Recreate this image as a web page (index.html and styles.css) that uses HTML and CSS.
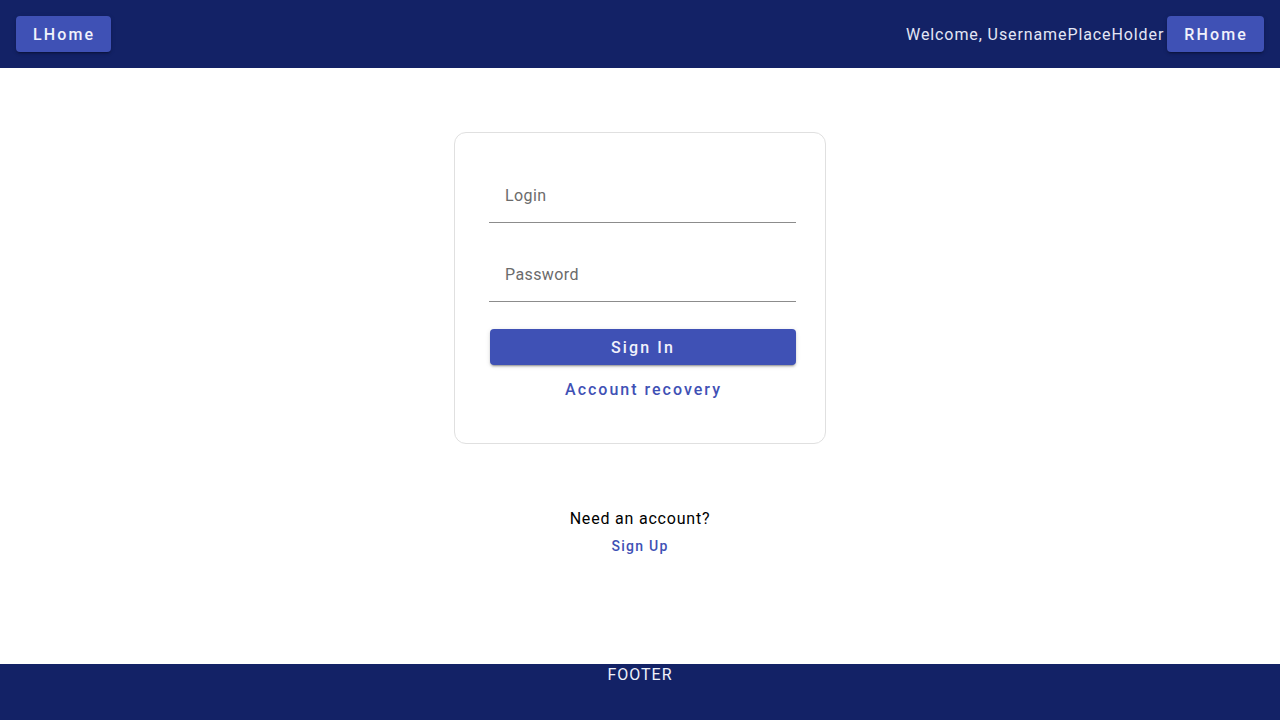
FILE: index.html
```html
<!DOCTYPE html>
<html>
<head>
<meta charset="utf-8">
<link rel="stylesheet" href="styles.css">
</head>
<body>
<div class="page">
  <header class="topbar">
    <button class="btn-raised">LHome</button>
    <div class="right">
      <span class="welcome">Welcome, UsernamePlaceHolder</span>
      <button class="btn-raised">RHome</button>
    </div>
  </header>
  <main class="main">
    <div class="card">
      <div class="field"><span class="label">Login</span></div>
      <div class="field"><span class="label">Password</span></div>
      <button class="btn-raised btn-block">Sign In</button>
      <button class="btn-text">Account recovery</button>
    </div>
    <div class="signup">
      <div class="need">Need an account?</div>
      <button class="btn-text small">Sign Up</button>
    </div>
  </main>
  <footer class="footer">FOOTER</footer>
</div>
</body>
</html>
```
FILE: styles.css
```css
* { box-sizing: border-box; }
html, body { margin: 0; padding: 0; height: 100%; }
body { font-family: Roboto, "Noto Sans", sans-serif; background: #fff; }
.page { display: flex; flex-direction: column; height: 720px; }
.topbar {
  height: 68px; background: #132266; display: flex; align-items: center;
  justify-content: space-between; padding: 0 16px;
}
.right { display: flex; align-items: center; gap: 3px; }
.welcome { color: #e3e6f5; font-size: 16px; letter-spacing: 0.9px; }
.btn-raised {
  font-family: Roboto, sans-serif; font-weight: 500; font-size: 16px;
  letter-spacing: 2.15px; color: #f1f2fb; background: #3f51b5; border: none;
  border-radius: 4px; height: 36px; padding: 0 16px 0 17px; cursor: pointer;
  box-shadow: 0 3px 1px -2px rgba(0,0,0,.2), 0 2px 2px 0 rgba(0,0,0,.14), 0 1px 5px 0 rgba(0,0,0,.12);
}
.main { flex: 1; display: flex; flex-direction: column; align-items: center; padding-top: 64px; }
.card {
  width: 372px; height: 312px; border: 1px solid #e0e0e0; border-radius: 12px;
  padding: 37px 29px 0 34px; display: flex; flex-direction: column; align-items: stretch;
}
.field {
  height: 53px; border-bottom: 1px solid #8c8c8c; display: flex; align-items: center;
  padding-left: 16px; padding-bottom: 2px; margin-bottom: 26px;
}
.field + .field { margin-bottom: 27px; }
.label { color: #6b6b6b; font-size: 16px; letter-spacing: 0.4px; }
.btn-block { width: 306px; margin-left: 1px; padding: 0 16px; }
.btn-text {
  font-family: Roboto, sans-serif; font-weight: 500; font-size: 16px;
  letter-spacing: 2.0px; color: #3f51b5; background: none; border: none;
  height: 36px; margin-top: 6px; align-self: center; margin-left: 2px; padding: 0 8px;
}
.signup { margin-top: 63px; display: flex; flex-direction: column; align-items: center; }
.need { font-size: 16px; color: #000; line-height: 24px; letter-spacing: 0.8px; }
.btn-text.small { font-size: 14px; letter-spacing: 1.25px; height: 24px; margin: 3px 0 0; }
.footer {
  height: 56px; background: #132266; color: #eef0fa; text-align: center;
  font-size: 16px; line-height: 22px; padding-top: 0; letter-spacing: 1px;
}
```
